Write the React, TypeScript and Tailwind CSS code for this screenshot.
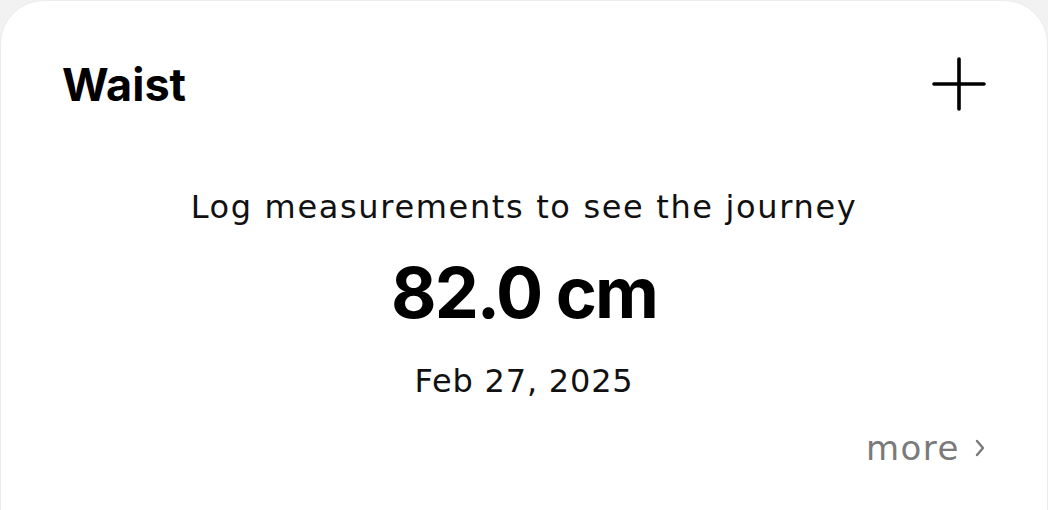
const bold = { fontFamily: 'Inter, "Noto Sans", sans-serif' };
const body = { fontFamily: '"DejaVu Sans", Inter, sans-serif' };

export default function App() {
  return (
    <div className="h-[510px] w-full overflow-hidden bg-[#f2f2f2]" style={bold}>
      <div className="h-[560px] rounded-t-[44px] border border-[#ececec] bg-white px-[61px] pt-[60px]">
        <div className="flex h-[46px] items-center justify-between">
          <h2 className="text-[45px] leading-none font-bold text-black">Waist</h2>
          <svg width="54" height="54" viewBox="0 0 54 54" fill="none" stroke="black" strokeWidth="3.6" strokeLinecap="round">
            <path d="M27 2v50M2 27h50" />
          </svg>
        </div>
        <div className="mt-[80px] flex flex-col items-center" style={body}>
          <p className="text-[32px] leading-[40px] font-normal tracking-[1.65px] text-[#111]">Log measurements to see the journey</p>
          <p className="mt-[31px] text-[70px] leading-[70px] font-bold tracking-[-2px] text-black" style={bold}>82.0 cm</p>
          <p className="mt-[33px] text-[32px] leading-[40px] tracking-[0.8px] text-[#111]">Feb 27, 2025</p>
        </div>
        <div className="mt-[27px] flex justify-end" style={body}>
          <span className="flex items-center gap-[14px] text-[34px] leading-[40px] tracking-[1.5px] text-[#7a7a7a]">
            more
            <svg width="12" height="20" viewBox="0 0 12 20" fill="none" stroke="#7a7a7a" strokeWidth="2.4" strokeLinecap="round" strokeLinejoin="round">
              <path d="M3 3l6 7-6 7" />
            </svg>
          </span>
        </div>
      </div>
    </div>
  );
}
